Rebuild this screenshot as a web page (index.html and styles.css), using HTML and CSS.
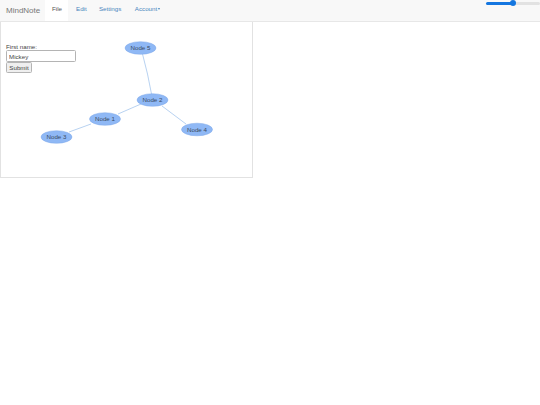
FILE: index.html
```html
<!DOCTYPE html>
<html lang="en">
<head>
<meta charset="utf-8">
<title>MindNote</title>
<link rel="stylesheet" href="styles.css">
</head>
<body>
<nav class="navbar">
  <a class="brand" href="#">MindNote</a>
  <ul class="tabs">
    <li class="tab active"><a href="#">File</a></li>
    <li class="tab"><a href="#">Edit</a></li>
    <li class="tab"><a href="#">Settings</a></li>
    <li class="tab"><a href="#">Account<span class="caret"></span></a></li>
  </ul>
  <input class="zoom" type="range" min="0" max="100" value="50">
</nav>
<main class="canvas">
  <svg class="graph" width="253" height="155" viewBox="0 22 253 155">
    <g class="edges">
      <path d="M142.500 54 Q148 74 151.500 94"/>
      <line x1="141" y1="104" x2="118" y2="114"/>
      <line x1="162" y1="106" x2="186" y2="124"/>
      <line x1="91" y1="124" x2="69" y2="132"/>
    </g>
    <g class="node"><ellipse cx="140.500" cy="48" rx="15.500" ry="6.300"/><text x="140.500" y="50.300">Node 5</text></g>
    <g class="node"><ellipse cx="152.500" cy="100" rx="15.500" ry="6.300"/><text x="152.500" y="102.300">Node 2</text></g>
    <g class="node"><ellipse cx="105" cy="119" rx="15.500" ry="6.300"/><text x="105" y="121.300">Node 1</text></g>
    <g class="node"><ellipse cx="56.500" cy="137" rx="15.500" ry="6.300"/><text x="56.500" y="139.300">Node 3</text></g>
    <g class="node"><ellipse cx="197" cy="129.500" rx="15.500" ry="6.300"/><text x="197" y="131.800">Node 4</text></g>
  </svg>
  <form class="name-form">
    <label class="label" for="first">First name:</label>
    <input class="field" id="first" type="text" value="Mickey">
    <button class="submit" type="button">Submit</button>
  </form>
</main>
</body>
</html>
```
FILE: styles.css
```css
* { box-sizing: border-box; }
html, body { margin: 0; padding: 0; background: #fff; }
body { font-family: "Liberation Sans", Arial, sans-serif; font-size: 6.200px; color: #444; }
a { text-decoration: none; }

.navbar {
  display: flex;
  align-items: flex-start;
  height: 22px;
  background: #f8f8f8;
  border-bottom: 1px solid #e7e7e7;
}
.brand {
  width: 45px;
  padding: 5.500px 0 0 6px;
  font-size: 8px;
  line-height: 10px;
  color: #777;
}
.tabs { display: flex; list-style: none; margin: 0; padding: 0; }
.tab a {
  display: block;
  height: 21px;
  padding: 4.500px 7px 0;
  line-height: 8px;
  color: #4a86bd;
  white-space: nowrap;
}
.tab:nth-child(2) a { padding-left: 8px; padding-right: 6px; }
.tab:nth-child(3) a { padding-left: 6.300px; padding-right: 6.500px; }
.tab:nth-child(4) a { padding-left: 7px; }
.tab.active a { background: #fff; color: #555; width: 23px; }
.caret {
  display: inline-block;
  margin-left: 0.500px;
  vertical-align: middle;
  border-top: 2px solid #4a86bd;
  border-left: 1.500px solid transparent;
  border-right: 1.500px solid transparent;
}

.zoom {
  -webkit-appearance: none;
  appearance: none;
  display: block;
  width: 54px;
  height: 6px;
  margin: 0 0 0 auto;
  background: transparent;
}
.zoom::-webkit-slider-runnable-track {
  height: 3px;
  border-radius: 1.500px;
  background: linear-gradient(to right, #1476e0 50%, #e2e2e2 50%);
}
.zoom::-webkit-slider-thumb {
  -webkit-appearance: none;
  width: 6px;
  height: 6px;
  margin-top: -1.500px;
  border-radius: 50%;
  background: #1476e0;
}

.canvas {
  position: relative;
  width: 253px;
  height: 156px;
  padding: 21px 0 0 5px;
  border: 1px solid #e2e2e2;
  border-top: 0;
}
.graph { position: absolute; left: -1px; top: 0; }
.edges { fill: none; stroke: #a6c6ee; stroke-width: 0.800; }
.node ellipse { fill: #8fb8f5; stroke: #7fa9e8; stroke-width: 0.500; }
.node text {
  font-family: "Liberation Sans", Arial, sans-serif;
  font-size: 6.200px;
  text-anchor: middle;
  fill: #3a4a60;
}

.name-form { position: relative; display: flex; flex-direction: column; align-items: flex-start; }
.label { line-height: 7px; }
.field {
  width: 70px;
  height: 12px;
  margin: 0;
  padding: 0 2px;
  font: inherit;
  color: #444;
  background: #fff;
  border: 1px solid #b4b4b4;
  border-radius: 1.500px;
}
.submit {
  width: 26px;
  height: 11px;
  margin: 0;
  padding: 0;
  font: inherit;
  color: #444;
  background: #efefef;
  border: 1px solid #b4b4b4;
  border-radius: 1.500px;
}
```
